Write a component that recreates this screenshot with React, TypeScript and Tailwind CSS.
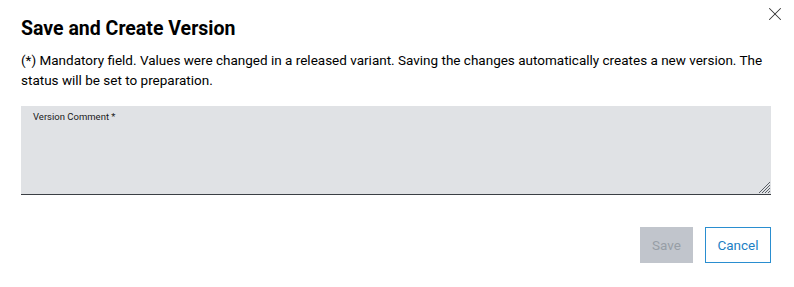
import { X } from "lucide-react";

export default function App() {
  return (
    <div className="relative h-[287px] w-[794px] bg-white font-['Roboto',sans-serif] text-[#000]">
      {/* close */}
      <button type="button" className="absolute right-[8px] top-[3px] text-[#333]">
        <X size={22} strokeWidth={1.1} />
      </button>

      <div className="px-[21px] pt-[16px]">
        <h1 className="text-[19.5px] font-bold leading-[25px]">Save and Create Version</h1>
        <p className="mt-[9px] text-[13.5px] leading-[20px]">
          (*) Mandatory field. Values were changed in a released variant. Saving the changes
          automatically creates a new version. The status will be set to preparation.
        </p>

        <div className="relative mr-[2px] mt-[16px] h-[89px] border-b border-[#3b3f44] bg-[#e0e2e5]">
          <span className="absolute left-[12px] top-[4px] text-[9.5px] leading-[14px] text-[#1a1a1a]">
            Version Comment *
          </span>
          <svg
            className="absolute bottom-[1px] right-[1px]"
            width="12"
            height="12"
            viewBox="0 0 12 12"
            stroke="#5a5f66"
            strokeWidth="1"
          >
            <line x1="1" y1="12" x2="12" y2="1" />
            <line x1="4" y1="12" x2="12" y2="4" />
            <line x1="7" y1="12" x2="12" y2="7" />
            <line x1="10" y1="12" x2="12" y2="10" />
          </svg>
        </div>

        <div className="mt-[32px] mr-[2px] flex justify-end gap-[12px]">
          <button
            type="button"
            disabled
            className="h-[36px] w-[53px] bg-[#c1c5cc] text-[13.5px] text-[#979ea6]"
          >
            Save
          </button>
          <button
            type="button"
            className="h-[36px] w-[66px] border border-[#2a8ed0] bg-white text-[13.5px] text-[#1c7fc4]"
          >
            Cancel
          </button>
        </div>
      </div>
    </div>
  );
}
